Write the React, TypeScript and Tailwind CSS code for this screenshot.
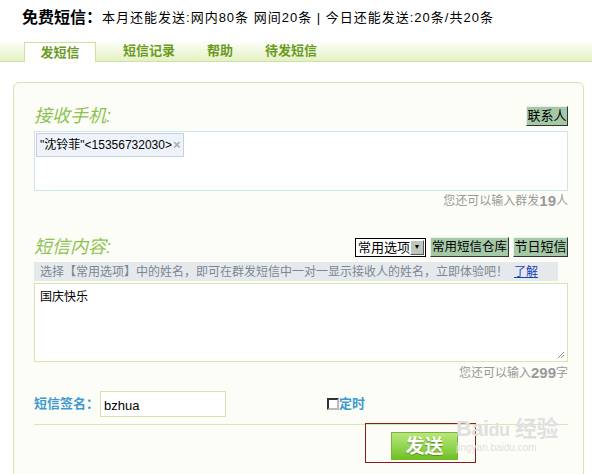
export default function App() {
  const tabs = ["短信记录", "帮助", "待发短信"];

  return (
    <main className="relative min-h-[474px] w-[592px] overflow-hidden bg-white font-['Liberation_Sans','Noto_Sans_CJK_SC',sans-serif] text-[12px] text-black">
      {/* Header */}
      <div className="flex h-[35px] items-center pl-[22px]">
        <span className="text-[16px] font-bold">免费短信：</span>
        <span className="text-[13px] tracking-[1px]">本月还能发送:网内80条 网间20条 | 今日还能发送:20条/共20条</span>
      </div>

      {/* Tabs */}
      <div className="mt-[5px] flex h-[22px] items-end border-b border-[#cde29f] bg-gradient-to-b from-white to-[#e3f1c1] pl-[24px] text-[13px] font-bold text-[#6b9a22]">
        <div className="-mb-px flex h-[20px] w-[72px] items-center justify-center border border-b-0 border-[#cde29f] bg-white">发短信</div>
        <div className="ml-[27px] flex h-[20px] items-center gap-[32px]">
          {tabs.map((t) => (
            <span key={t}>{t}</span>
          ))}
        </div>
      </div>

      {/* Panel */}
      <section className="ml-[13px] mt-[20px] w-[571px] rounded-t-[6px] border border-[#d4e5ad] bg-[#fdfdf8] pb-[40px] pl-[20px] pr-[15px] pt-[21px]">
        <div className="flex h-[24px] items-center justify-between">
          <h2 className="text-[18px] italic text-[#8cc350]">接收手机:</h2>
          <button className="h-[20px] w-[42px] whitespace-nowrap border border-b-[#333] border-l-[#e8f2e8] border-r-[#333] border-t-[#e8f2e8] bg-[#a5c9a7] text-[13px] leading-[18px]">联系人</button>
        </div>

        <div className="mt-[3px] h-[60px] border border-[#cfe4ec] bg-white p-px">
          <span className="inline-flex h-[24px] items-center border border-[#c3d2e2] bg-[#eef3fa] pl-[3px] pr-[2px] text-[12px]">
            "沈铃菲"&lt;15356732030&gt;<span className="ml-[1px] text-[13px] font-bold text-[#aaa]">×</span>
          </span>
        </div>
        <div className="mt-[2px] flex h-[16px] items-center justify-end text-[12px] text-[#999]">
          您还可以输入群发<b className="text-[15px]">19</b>人
        </div>

        <div className="mt-[26px] flex h-[24px] items-center justify-between">
          <h2 className="text-[18px] italic text-[#8cc350]">短信内容:</h2>
          <div className="flex items-center gap-[4px] text-[13px]">
            <div className="flex h-[19px] w-[71px] items-center border border-black bg-white">
              <span className="flex-1 whitespace-nowrap pl-[2px] leading-none">常用选项</span>
              <span className="mr-px flex h-[15px] w-[14px] items-center justify-center border border-b-[#555] border-l-white border-r-[#555] border-t-white bg-[#bcc8bc] text-[7px]">▼</span>
            </div>
            <button className="h-[20px] w-[79px] whitespace-nowrap border border-b-[#333] border-l-[#e8f2e8] border-r-[#333] border-t-[#e8f2e8] bg-[#a5c9a7] text-[12.5px] leading-[18px]">常用短信仓库</button>
            <button className="h-[20px] w-[55px] whitespace-nowrap border border-b-[#333] border-l-[#e8f2e8] border-r-[#333] border-t-[#e8f2e8] bg-[#a5c9a7] leading-[18px]">节日短信</button>
          </div>
        </div>

        <div className="mr-[10px] mt-[3px] flex h-[19px] items-center bg-[#e6e9ec] pl-[6px] text-[12px] text-[#7a8794]">
          选择【常用选项】中的姓名，即可在群发短信中一对一显示接收人的姓名，立即体验吧！
          <a className="ml-[6px] text-[#1a3fb8] underline">了解</a>
        </div>

        <div className="relative mt-[2px] h-[79px] border border-[#d6e5b4] bg-white px-[5px] pt-[4px] text-[12px]">
          国庆快乐
          <svg className="absolute bottom-[2px] right-[2px]" width="8" height="8" viewBox="0 0 8 8">
            <path d="M7 1L1 7M7 4L4 7" stroke="#888" strokeWidth="1" />
          </svg>
        </div>
        <div className="mt-[3px] flex h-[16px] items-center justify-end text-[12px] text-[#999]">
          您还可以输入<b className="text-[15px]">299</b>字
        </div>

        <div className="mt-[10px] flex h-[26px] items-center">
          <span className="w-[66px] text-[13px] font-bold text-[#3d9ad1]">短信签名：</span>
          <div className="flex h-[26px] w-[126px] items-center border border-[#d6e2b4] bg-white pl-[3px] pt-[3px] text-[13px]">bzhua</div>
          <label className="ml-[101px] flex items-center text-[13px] font-bold text-[#3d9ad1]">
            <span className="h-[12px] w-[12px] border-2 border-b-[#bbb] border-l-[#333] border-r-[#bbb] border-t-[#333] bg-white" />
            定时
          </label>
        </div>

        <div className="mt-[7px] border-t border-[#d9e6b5]" />

        <div className="relative mt-[7px] h-[28px]">
          <button className="ml-[357px] h-[28px] w-[67px] border border-[#7db23a] bg-gradient-to-b from-[#b7e878] to-[#6fc21f] text-[19px] font-bold text-white [text-shadow:0_1px_1px_#5a8a1a]">发送</button>
          <div className="absolute left-[331px] top-[-9px] h-[40px] w-[111px] border border-[#8b1a1a]" />
          <div className="absolute left-[422px] top-[-14px] select-none leading-none text-[#e0e0e0]">
            <div className="text-[22px] font-bold tracking-tight">Bai<span className="text-[18px]">du</span> 经验</div>
            <div className="mt-[3px] text-[10px]">jingyan.baidu.com</div>
          </div>
        </div>
      </section>
    </main>
  );
}
